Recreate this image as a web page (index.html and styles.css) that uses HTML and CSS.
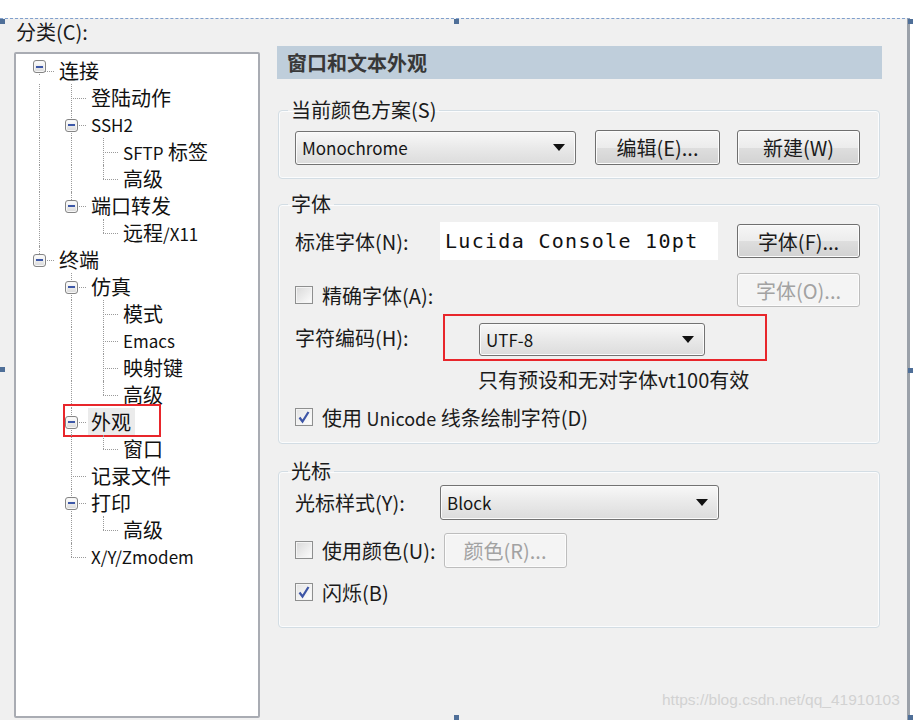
FILE: index.html
```html
<!DOCTYPE html>
<html lang="zh-CN">
<head>
<meta charset="UTF-8">
<meta name="viewport" content="width=device-width, initial-scale=1.0">
<title>会话选项 - 外观</title>
<link rel="stylesheet" href="styles.css">
</head>
<body>
<div class="top"></div>
<div class="dlg">
  <div class="side">
    <div class="cat">分类(C):</div>
    <div class="tree">
      <div class="row"><i class="j top"><b class="box"></b></i><span class="lbl">连接</span></div>
      <div class="row"><i class="g v"></i><i class="j mid"></i><span class="lbl">登陆动作</span></div>
      <div class="row"><i class="g v"></i><i class="j mid"><b class="box"></b></i><span class="lbl en">SSH2</span></div>
      <div class="row"><i class="g v"></i><i class="g v"></i><i class="j mid"></i><span class="lbl"><span class="en">SFTP</span> 标签</span></div>
      <div class="row"><i class="g v"></i><i class="g v"></i><i class="j last"></i><span class="lbl">高级</span></div>
      <div class="row"><i class="g v"></i><i class="j last"><b class="box"></b></i><span class="lbl">端口转发</span></div>
      <div class="row"><i class="g v"></i><i class="g"></i><i class="j last"></i><span class="lbl">远程<span class="en">/X11</span></span></div>
      <div class="row"><i class="j last"><b class="box"></b></i><span class="lbl">终端</span></div>
      <div class="row"><i class="g"></i><i class="j mid"><b class="box"></b></i><span class="lbl">仿真</span></div>
      <div class="row"><i class="g"></i><i class="g v"></i><i class="j mid"></i><span class="lbl">模式</span></div>
      <div class="row"><i class="g"></i><i class="g v"></i><i class="j mid"></i><span class="lbl en">Emacs</span></div>
      <div class="row"><i class="g"></i><i class="g v"></i><i class="j mid"></i><span class="lbl">映射键</span></div>
      <div class="row"><i class="g"></i><i class="g v"></i><i class="j last"></i><span class="lbl">高级</span></div>
      <div class="row marked"><i class="g"></i><i class="j mid"><b class="box"></b></i><span class="lbl cur">外观</span><span class="mark"></span></div>
      <div class="row"><i class="g"></i><i class="g v"></i><i class="j last"></i><span class="lbl">窗口</span></div>
      <div class="row"><i class="g"></i><i class="j mid"></i><span class="lbl">记录文件</span></div>
      <div class="row"><i class="g"></i><i class="j mid"><b class="box"></b></i><span class="lbl">打印</span></div>
      <div class="row"><i class="g"></i><i class="g v"></i><i class="j last"></i><span class="lbl">高级</span></div>
      <div class="row"><i class="g"></i><i class="j last"></i><span class="lbl en">X/Y/Zmodem</span></div>
    </div>
  </div>

  <div class="main">
    <div class="head">窗口和文本外观</div>

    <fieldset class="grp g1">
      <legend>当前颜色方案(S)</legend>
      <div class="line">
        <div class="sel w-scheme"><span>Monochrome</span><i class="arr"></i></div>
        <button class="btn w-edit">编辑(E)...</button>
        <button class="btn w-new">新建(W)</button>
      </div>
    </fieldset>

    <fieldset class="grp g2">
      <legend>字体</legend>
      <div class="line r-font">
        <span class="lab">标准字体(N):</span>
        <div class="fontbox">Lucida Console 10pt</div>
        <button class="btn w-font">字体(F)...</button>
      </div>
      <div class="line r-exact">
        <label class="chk"><span class="cb"></span><span>精确字体(A):</span></label>
        <button class="btn off w-font2">字体(O)...</button>
      </div>
      <div class="line r-enc">
        <span class="lab lab-enc">字符编码(H):</span>
        <div class="redbox">
          <div class="sel w-enc"><span>UTF-8</span><i class="arr"></i></div>
        </div>
      </div>
      <div class="hint">只有预设和无对字体vt100有效</div>
      <div class="line r-uni">
        <label class="chk"><span class="cb on"><svg width="14" height="14" viewBox="0 0 14 14"><path d="M2.5 7.5 L5.5 11.5 L11.5 2" fill="none" stroke="#3d55a6" stroke-width="2.2"/></svg></span><span>使用 <span class="en-r">Unicode</span> 线条绘制字符(D)</span></label>
      </div>
    </fieldset>

    <fieldset class="grp g3">
      <legend>光标</legend>
      <div class="line r-cur">
        <span class="lab">光标样式(Y):</span>
        <div class="sel w-cur"><span>Block</span><i class="arr"></i></div>
      </div>
      <div class="line r-color">
        <label class="chk"><span class="cb"></span><span>使用颜色(U):</span></label>
        <button class="btn off w-color">颜色(R)...</button>
      </div>
      <div class="line r-blink">
        <label class="chk"><span class="cb on"><svg width="14" height="14" viewBox="0 0 14 14"><path d="M2.5 7.5 L5.5 11.5 L11.5 2" fill="none" stroke="#3d55a6" stroke-width="2.2"/></svg></span><span>闪烁(B)</span></label>
      </div>
    </fieldset>
  </div>

  <div class="wm">https://blog.csdn.net/qq_41910103</div>
</div>

<span class="hd" style="left:0;top:19px"></span>
<span class="hd" style="left:454px;top:19px"></span>
<span class="hd" style="left:908px;top:19px"></span>
<span class="hd" style="left:0;top:367px"></span>
<span class="hd" style="left:908px;top:368px"></span>
<span class="hd" style="left:454px;top:715px"></span>
<span class="hd" style="left:908px;top:715px"></span>
</body>
</html>
```

FILE: styles.css
```css
* { box-sizing: border-box; }
body { margin: 0; background: #fff; font-family: "Noto Sans CJK SC", "Noto Sans", sans-serif; font-size: 20px; color: #1b1b1b; }
.top { height: 18px; }
.dlg { position: relative; width: 910px; height: 702px; display: grid; grid-template-columns: 277px 605px; align-content: start; background: #f0f0f0; border-top: 1px dashed #7f9fcc; border-right: 3px solid #9ba1a9; overflow: hidden; }

/* left: category tree */
.side { padding-left: 14px; }
.cat { line-height: 26px; padding-left: 2px; }
.tree { margin-top: 7px; width: 246px; height: 666px; background: #fff; border: 2px solid #a9acb3; border-radius: 2px; padding: 3px 0 0 7px; }
.row { display: flex; height: 27px; }
.row.marked { position: relative; }
.g, .j { position: relative; flex: none; width: 32px; }
.j { display: flex; align-items: center; justify-content: center; }
.g.v::before, .j::before { content: ""; position: absolute; left: 16px; border-left: 1px dotted #9a9a9a; }
.g.v::before { top: 0; bottom: 0; }
.j.mid::before { top: 0; bottom: 0; }
.j.last::before { top: 0; height: 14px; }
.j.top::before { top: 14px; bottom: 0; }
.j::after { content: ""; position: absolute; left: 16px; right: 1px; top: 14px; border-top: 1px dotted #9a9a9a; }
.box { position: relative; z-index: 1; width: 13px; height: 13px; margin-top: 1px; border: 1px solid #858585; border-radius: 3px; background: linear-gradient(#ffffff, #d9d9d9); box-shadow: inset 0 0 0 1px #f6f6f6; display: flex; align-items: center; justify-content: center; }
.box::after { content: ""; width: 7px; height: 2px; background: #3d58a8; }
.lbl { padding-left: 4px; line-height: 27px; white-space: nowrap; color: #111; }
.lbl.en, .lbl .en { font-size: 17px; }
.lbl.cur { margin-left: 1px; padding: 0 4px 0 3px; background: #ebebeb; }
.mark { position: absolute; left: 40px; top: -4px; width: 98px; height: 33px; border: 2px solid #e8262b; }

/* right: settings */
.head { margin-top: 27px; height: 33px; line-height: 33px; padding-left: 10px; background: #bfcedb; color: #383838; font-weight: bold; }
.grp { width: 602px; margin: 0 0 0 1px; border: 1px solid #d3dde4; border-radius: 4px; box-shadow: inset 0 0 0 1px #fbfcfd; padding: 0 19px 0 16px; min-width: 0; }
legend { line-height: 24px; padding: 0 3px; margin-left: -7px; }
.g1 { margin-top: 19px; padding-top: 8px; padding-bottom: 13px; }
.g2 { margin-top: 13px; padding-top: 6px; padding-bottom: 14px; }
.g3 { margin-top: 15px; padding-top: 2px; padding-bottom: 23px; }
.line { display: flex; align-items: center; }
.g1 .line { height: 35px; }
.en-r { font-size: 18px; }

.sel { display: flex; align-items: center; height: 34px; padding: 0 10px 0 6px; border: 1px solid #737373; border-radius: 3px; background: linear-gradient(#f8f8f8, #e9e9e9 50%, #dcdcdc); box-shadow: inset 0 0 0 1px #fbfbfb; font-size: 17px; color: #151515; }
.arr { margin-left: auto; width: 0; height: 0; border-left: 6px solid transparent; border-right: 6px solid transparent; border-top: 7px solid #111; }
.btn { height: 35px; padding: 0; border: 1px solid #6f6f6f; border-radius: 3px; background: linear-gradient(#f6f6f6, #ececec 50%, #dedede 51%, #d2d2d2); box-shadow: inset 0 0 0 1px #fcfcfc; font: inherit; font-size: 20px; color: #1b1b1b; }
.btn.off { border-color: #bdbdbd; background: #f4f4f4; color: #a2a2a2; }

.w-scheme { width: 281px; }
.w-edit { width: 125px; margin-left: 19px; }
.w-new { width: 123px; margin-left: 17px; }

.r-font { height: 38px; }
.lab { width: 145px; flex: none; white-space: nowrap; }
.fontbox { width: 278px; height: 38px; line-height: 38px; padding-left: 5px; background: #fff; font-family: "DejaVu Sans Mono", "Liberation Mono", monospace; font-size: 20px; letter-spacing: 1.3px; color: #111; }
.w-font { width: 123px; height: 34px; margin-left: 19px; }
.r-exact { height: 34px; margin-top: 13px; align-items: flex-end; }
.w-font2 { width: 123px; height: 34px; margin-left: auto; }
.r-enc { margin-top: 7px; }
.lab-enc { width: 148px; }
.redbox { border: 2px solid #e8262b; padding: 7px 60px 3px 34px; }
.w-enc { width: 226px; height: 33px; }
.hint { margin-top: 7px; padding-left: 183px; line-height: 24px; }
.r-uni { margin-top: 13px; }

.chk { display: flex; align-items: center; height: 24px; white-space: nowrap; }
.cb { width: 18px; height: 18px; margin-right: 9px; border: 1px solid #8e8f8f; background: linear-gradient(135deg, #d8d8d8, #fdfdfd); box-shadow: inset 0 0 0 1px #f4f4f4; display: flex; align-items: center; justify-content: center; }
.cb.on { background: linear-gradient(135deg, #e4e4e4, #ffffff); }

.r-cur .lab { width: 145px; }
.w-cur { width: 279px; height: 35px; }
.r-color { height: 34px; margin-top: 13px; }
.w-color { width: 123px; height: 35px; margin-left: 8px; }
.r-blink { margin-top: 13px; }

.wm { position: absolute; left: 662px; top: 672px; font-family: "Liberation Sans", Arial, sans-serif; font-size: 15.5px; color: #d2d2d2; }
.hd { position: absolute; width: 5px; height: 5px; background: #4f6f98; }
```
